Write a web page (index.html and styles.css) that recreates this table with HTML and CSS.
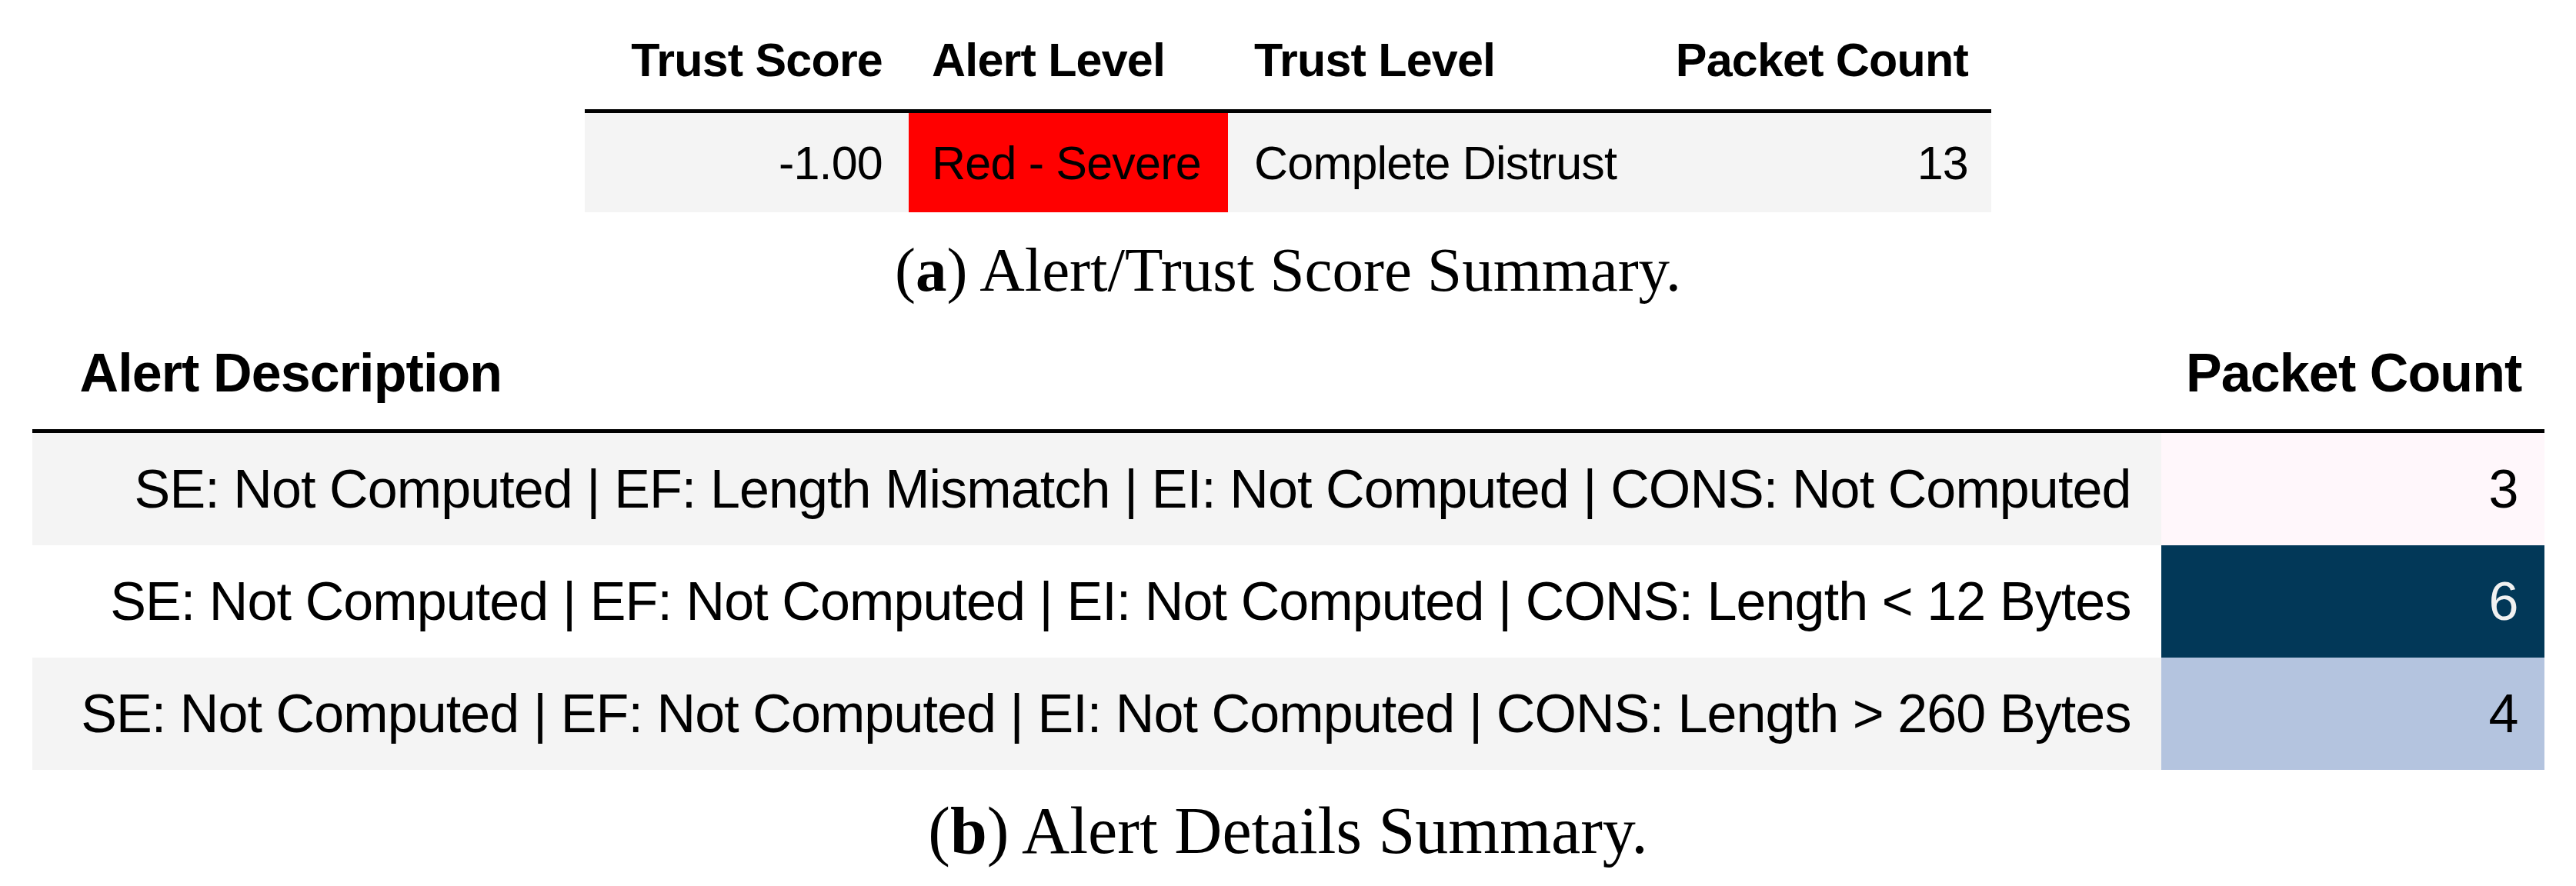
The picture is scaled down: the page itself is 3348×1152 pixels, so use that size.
FILE: index.html
```html
<!DOCTYPE html>
<html lang="en">
<head>
<meta charset="utf-8">
<title>Alert Summary</title>
<link rel="stylesheet" href="styles.css">
</head>
<body>
<figure class="sub sub-a">
  <table class="tbl tbl-summary">
    <colgroup>
      <col class="c-score"><col class="c-alert"><col class="c-trust"><col class="c-count">
    </colgroup>
    <thead>
      <tr>
        <th class="num">Trust Score</th>
        <th class="txt">Alert Level</th>
        <th class="txt wide">Trust Level</th>
        <th class="num end">Packet Count</th>
      </tr>
    </thead>
    <tbody>
      <tr class="shade">
        <td class="num">-1.00</td>
        <td class="txt red">Red - Severe</td>
        <td class="txt wide">Complete Distrust</td>
        <td class="num end">13</td>
      </tr>
    </tbody>
  </table>
  <figcaption class="cap cap-a">(<b>a</b>) Alert/Trust Score Summary.</figcaption>
</figure>

<figure class="sub sub-b">
  <table class="tbl tbl-details">
    <colgroup>
      <col class="c-desc"><col class="c-pk">
    </colgroup>
    <thead>
      <tr>
        <th class="desc-h">Alert Description</th>
        <th class="pk-h">Packet Count</th>
      </tr>
    </thead>
    <tbody>
      <tr class="shade">
        <td class="desc">SE: Not Computed | EF: Length Mismatch | EI: Not Computed | CONS: Not Computed</td>
        <td class="pk g-low">3</td>
      </tr>
      <tr class="plain">
        <td class="desc">SE: Not Computed | EF: Not Computed | EI: Not Computed | CONS: Length &lt; 12 Bytes</td>
        <td class="pk g-high">6</td>
      </tr>
      <tr class="shade">
        <td class="desc">SE: Not Computed | EF: Not Computed | EI: Not Computed | CONS: Length &gt; 260 Bytes</td>
        <td class="pk g-mid">4</td>
      </tr>
    </tbody>
  </table>
  <figcaption class="cap cap-b">(<b>b</b>) Alert Details Summary.</figcaption>
</figure>
</body>
</html>
```

FILE: styles.css
```css
html, body {
  margin: 0;
  padding: 0;
  background: #ffffff;
}

body {
  width: 3348px;
  display: flex;
  flex-direction: column;
  align-items: center;
  color: #000;
}

.sub {
  margin: 0;
  display: flex;
  flex-direction: column;
  align-items: center;
}

.tbl {
  border-collapse: separate;
  border-spacing: 0;
  table-layout: fixed;
  font-family: "Liberation Sans", Arial, sans-serif;
  white-space: nowrap;
}

.tbl th {
  font-weight: bold;
  border-bottom: 5px solid #000;
}

.tbl td, .tbl th {
  padding-left: 0;
  padding-right: 0;
}

.shade td { background: #f4f4f4; }
.plain td { background: #ffffff; }

/* ---------- (a) summary table ---------- */
.tbl-summary {
  width: 1828px;
  font-size: 61px;
  letter-spacing: -0.8px;
  line-height: 70px;
}
.c-score { width: 421px; }
.c-alert { width: 415px; }
.c-trust { width: 552px; }
.c-count { width: 440px; }

.tbl-summary th {
  padding-top: 43px;
  padding-bottom: 29px;
}
.tbl-summary td {
  padding-top: 30px;
  padding-bottom: 29px;
}
.tbl-summary .num { text-align: right; padding-right: 34px; }
.tbl-summary .num.end { padding-right: 30px; }
.tbl-summary .txt { text-align: left; padding-left: 30px; }
.tbl-summary .txt.wide { padding-left: 34px; }
.tbl-summary td.red { background: #ff0000; }

/* ---------- captions ---------- */
.cap {
  font-family: "Liberation Serif", "Times New Roman", serif;
  color: #000;
  white-space: nowrap;
}
.cap-a {
  font-size: 81px;
  line-height: 90px;
  margin-top: 30px;
}
.cap-b {
  font-size: 86px;
  line-height: 96px;
  margin-top: 31px;
}

/* ---------- (b) details table ---------- */
.tbl-details {
  width: 3265px;
  font-size: 70px;
  letter-spacing: -0.9px;
  line-height: 80px;
}
.c-desc { width: 2767px; }
.c-pk { width: 498px; }

.tbl-details th {
  padding-top: 49px;
  padding-bottom: 33px;
}
.tbl-details .desc-h { text-align: left; padding-left: 62px; }
.tbl-details .pk-h { text-align: right; padding-right: 29px; }

.tbl-details td {
  padding-top: 33px;
  padding-bottom: 33px;
}
.tbl-details .desc { text-align: right; padding-right: 39px; }
.tbl-details .pk { text-align: right; padding-right: 34px; }

.tbl-details td.g-low { background: #fff7fb; color: #000; }
.tbl-details td.g-high { background: #023858; color: #f1f1f1; }
.tbl-details td.g-mid { background: #b4c4df; color: #000; }
```
